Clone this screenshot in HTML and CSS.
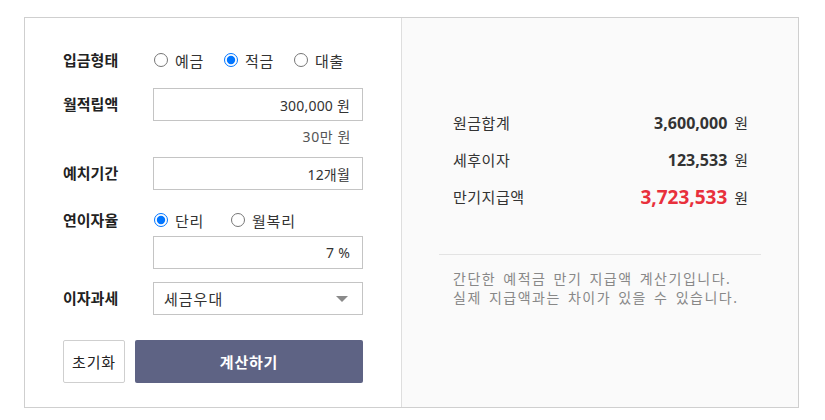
FILE: index.html
```html
<!DOCTYPE html>
<html lang="ko">

<head>
    <meta charset="UTF-8">
    <meta name="viewport" content="width=device-width, initial-scale=1.0">
    <title>예적금 계산기</title>
    <link rel="stylesheet" href="styles.css">
</head>

<body>

    <div class="calc">
        <!-- 입력 영역 -->
        <form class="form-panel" onsubmit="return false">
            <div class="field">
                <span class="field-label radio-label">입금형태</span>
                <div class="field-control">
                    <div class="radio-group">
                        <label class="radio"><input type="radio" name="kind"> 예금</label>
                        <label class="radio"><input type="radio" name="kind" checked> 적금</label>
                        <label class="radio"><input type="radio" name="kind"> 대출</label>
                    </div>
                </div>
            </div>

            <div class="field field-amount">
                <span class="field-label">월적립액</span>
                <div class="field-control">
                    <input type="text" class="text-input" value="300,000 원">
                    <div class="hint">30만 원</div>
                </div>
            </div>

            <div class="field field-period">
                <span class="field-label">예치기간</span>
                <div class="field-control">
                    <input type="text" class="text-input" value="12개월">
                </div>
            </div>

            <div class="field field-rate">
                <span class="field-label radio-label">연이자율</span>
                <div class="field-control">
                    <div class="radio-group">
                        <label class="radio"><input type="radio" name="rate" checked> 단리</label>
                        <label class="radio"><input type="radio" name="rate"> 월복리</label>
                    </div>
                    <input type="text" class="text-input rate-input" value="7 %">
                </div>
            </div>

            <div class="field field-tax">
                <span class="field-label">이자과세</span>
                <div class="field-control">
                    <div class="select-wrap">
                        <select class="select">
                            <option>세금우대</option>
                            <option>일반과세</option>
                            <option>비과세</option>
                        </select>
                    </div>
                </div>
            </div>

            <div class="buttons">
                <button type="reset" class="btn btn-reset">초기화</button>
                <button type="submit" class="btn btn-calc">계산하기</button>
            </div>
        </form>

        <!-- 결과 영역 -->
        <div class="result-panel">
            <div class="summary">
                <div class="summary-row">
                    <span class="summary-label">원금합계</span>
                    <span class="summary-value"><strong>3,600,000</strong> 원</span>
                </div>
                <div class="summary-row">
                    <span class="summary-label">세후이자</span>
                    <span class="summary-value"><strong>123,533</strong> 원</span>
                </div>
                <div class="summary-row total">
                    <span class="summary-label">만기지급액</span>
                    <span class="summary-value"><strong>3,723,533</strong> 원</span>
                </div>
            </div>
            <p class="note">
                간단한 예적금 만기 지급액 계산기입니다.<br>
                실제 지급액과는 차이가 있을 수 있습니다.
            </p>
        </div>
    </div>

</body>

</html>
```

FILE: styles.css
```css
body {
    margin: 0;
    font-family: "Noto Sans", "Noto Sans CJK KR", sans-serif;
    font-size: 15px;
    letter-spacing: 0.5px;
    color: #222;
    background-color: #fff;
}

.calc {
    display: flex;
    width: 775px;
    height: 391px;
    margin: 17px 0 0 24px;
    border: 1px solid #cfcfcf;
    box-sizing: border-box;
}

/* left: form */
.form-panel {
    width: 376px;
    padding: 30px 0 0 38px;
    box-sizing: border-box;
}

.field {
    display: flex;
    align-items: flex-start;
}

.field-label {
    width: 90px;
    flex-shrink: 0;
    font-weight: bold;
    letter-spacing: 0;
    line-height: 33px;
}

.radio-label {
    line-height: 24px;
}

.field-control {
    width: 210px;
}

.radio-group {
    display: flex;
    height: 24px;
    align-items: center;
}

.radio {
    display: flex;
    align-items: center;
    width: 77px;
    color: #333;
    letter-spacing: 0.8px;
    cursor: pointer;
}

.radio input {
    width: 14px;
    height: 14px;
    margin: 0 7px 0 1px;
}

.text-input,
.select {
    display: block;
    width: 100%;
    height: 33px;
    box-sizing: border-box;
    border: 1px solid #c4c4c4;
    border-radius: 0;
    background: #fff;
    font-family: inherit;
    font-size: 14px;
    color: #333;
    outline: none;
}

.text-input {
    text-align: right;
    padding: 0 12px 0 8px;
    letter-spacing: 0.2px;
}

.field-amount {
    margin-top: 16px;
}

.hint {
    text-align: right;
    padding-right: 12px;
    margin-top: 5px;
    font-size: 14px;
    line-height: 22px;
    letter-spacing: 0.6px;
    color: #555;
}

.field-period {
    margin-top: 9px;
}

.field-rate {
    margin-top: 18px;
}

.field-rate .rate-input {
    margin-top: 4px;
}

.field-tax {
    margin-top: 13px;
}

.select-wrap {
    position: relative;
}

.select {
    appearance: none;
    -webkit-appearance: none;
    padding: 0 10px;
    font-size: 15px;
    letter-spacing: 1px;
}

.select-wrap::after {
    content: "";
    position: absolute;
    right: 15px;
    top: 14px;
    border-left: 6px solid transparent;
    border-right: 6px solid transparent;
    border-top: 6px solid #8a8a8a;
    pointer-events: none;
}

.buttons {
    display: flex;
    gap: 10px;
    margin-top: 25px;
}

.btn {
    height: 43px;
    border-radius: 2px;
    font-family: inherit;
    font-size: 15px;
    letter-spacing: 0.8px;
    cursor: pointer;
}

.btn-reset {
    width: 62px;
    padding: 0;
    border: 1px solid #cfcfcf;
    background-color: #fff;
    color: #222;
}

.btn-calc {
    width: 228px;
    border: none;
    background-color: #5e6384;
    color: #fff;
    font-weight: bold;
}

.btn-calc:hover {
    background-color: #4f5473;
}

/* right: result */
.result-panel {
    flex: 1;
    padding: 86px 37px 0;
    background-color: #fafafa;
    border-left: 1px solid #dedede;
}

.summary {
    padding: 0 13px 39px 14px;
    border-bottom: 1px solid #e3e3e3;
}

.summary-row {
    display: flex;
    justify-content: space-between;
    align-items: center;
    height: 37px;
}

.summary-label {
    color: #333;
}

.summary-value {
    color: #333;
    letter-spacing: 0;
}

.summary-value strong {
    font-size: 16px;
    margin-right: 3px;
}

.total .summary-value strong {
    font-size: 19px;
    color: #e8303c;
}

.note {
    margin: 14px 0 0;
    padding: 0 14px;
    font-size: 14px;
    line-height: 19px;
    letter-spacing: 1.5px;
    word-spacing: 2px;
    color: #888;
}
```
